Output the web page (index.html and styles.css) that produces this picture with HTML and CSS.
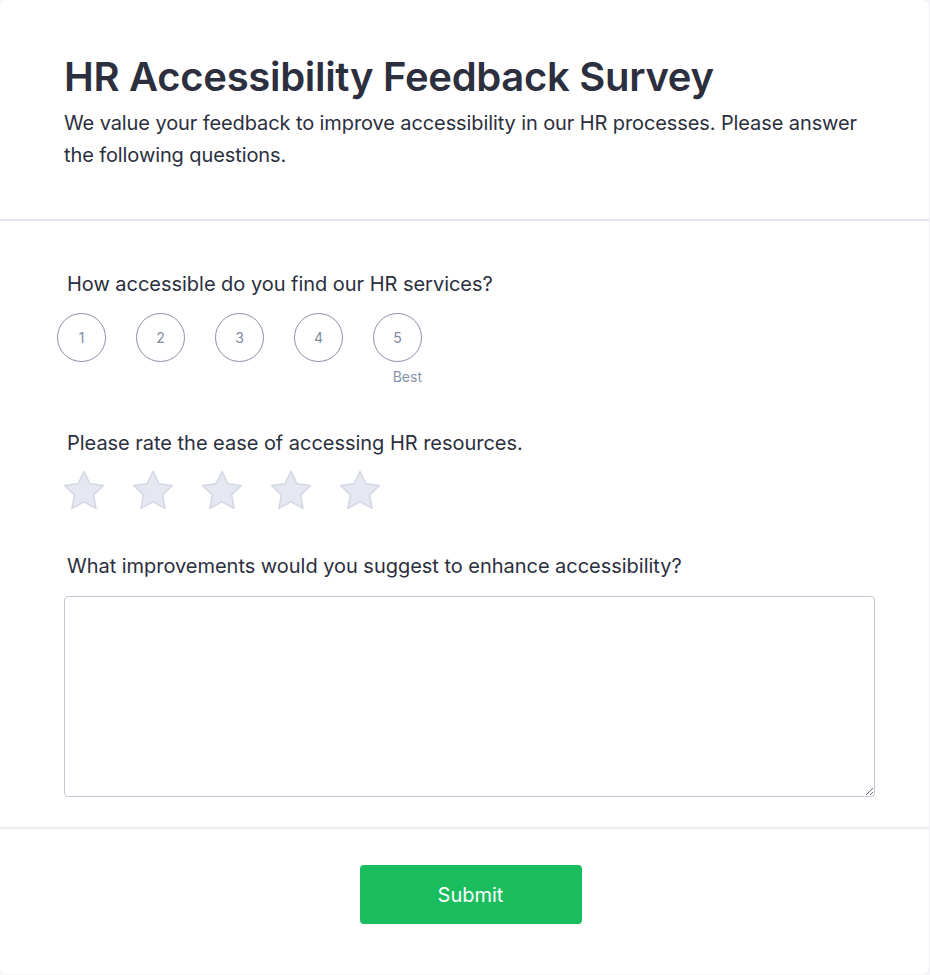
FILE: index.html
```html
<!DOCTYPE html>
<html lang="en">
<head>
<meta charset="utf-8">
<title>HR Accessibility Feedback Survey</title>
<link rel="stylesheet" href="styles.css">
</head>
<body>
<div class="card">
  <header class="head">
    <h1 class="title">HR Accessibility Feedback Survey</h1>
    <p class="intro">We value your feedback to improve accessibility in our HR processes. Please answer the following questions.</p>
  </header>
  <section class="body">
    <div class="question q1">
      <label class="qlabel">How accessible do you find our HR services?</label>
      <div class="scale">
        <button class="dot">1</button>
        <button class="dot">2</button>
        <button class="dot">3</button>
        <button class="dot">4</button>
        <div class="dotwrap">
          <button class="dot">5</button>
          <span class="best">Best</span>
        </div>
      </div>
    </div>
    <div class="question q2">
      <label class="qlabel">Please rate the ease of accessing HR resources.</label>
      <div class="stars">
        <svg class="star" viewBox="0 0 24 24"><path d="M12 2.6l2.85 5.9 6.45.85-4.7 4.5 1.2 6.45L12 17.2l-5.8 3.1 1.2-6.45-4.7-4.5 6.45-.85z"/></svg>
        <svg class="star" viewBox="0 0 24 24"><path d="M12 2.6l2.85 5.9 6.45.85-4.7 4.5 1.2 6.45L12 17.2l-5.8 3.1 1.2-6.45-4.7-4.5 6.45-.85z"/></svg>
        <svg class="star" viewBox="0 0 24 24"><path d="M12 2.6l2.85 5.9 6.45.85-4.7 4.5 1.2 6.45L12 17.2l-5.8 3.1 1.2-6.45-4.7-4.5 6.45-.85z"/></svg>
        <svg class="star" viewBox="0 0 24 24"><path d="M12 2.6l2.85 5.9 6.45.85-4.7 4.5 1.2 6.45L12 17.2l-5.8 3.1 1.2-6.45-4.7-4.5 6.45-.85z"/></svg>
        <svg class="star" viewBox="0 0 24 24"><path d="M12 2.6l2.85 5.9 6.45.85-4.7 4.5 1.2 6.45L12 17.2l-5.8 3.1 1.2-6.45-4.7-4.5 6.45-.85z"/></svg>
      </div>
    </div>
    <div class="question q3">
      <label class="qlabel">What improvements would you suggest to enhance accessibility?</label>
      <textarea class="answer"></textarea>
    </div>
  </section>
  <footer class="foot">
    <button class="submit">Submit</button>
  </footer>
</div>
</body>
</html>
```
FILE: styles.css
```css
* { box-sizing: border-box; }
html, body { margin: 0; padding: 0; background: #f7f7fa; }
body { font-family: Inter, "Noto Sans", sans-serif; color: #2b2f3e; }

.card {
  width: 929px;
  height: 974px;
  background: #fff;
  border-radius: 6px;
  box-shadow: 0 0 0 1px #f0f0f4;
  display: flex;
  flex-direction: column;
}

.head {
  padding: 53px 64px 48px;
  border-bottom: 2px solid #e2e3ec;
}
.title {
  margin: 0;
  font-size: 40px;
  line-height: 48px;
  font-weight: 600;
  letter-spacing: -0.3px;
  color: #2b2f3e;
}
.intro {
  margin: 6px 0 0;
  font-size: 20px;
  line-height: 32px;
  font-weight: 400;
  letter-spacing: -0.1px;
  color: #2b2f3e;
  max-width: 801px;
}

.body {
  padding: 51px 54px 30px 64px;
  border-bottom: 2px solid #ececf2;
  display: flex;
  flex-direction: column;
}
.question { display: flex; flex-direction: column; }
.qlabel {
  display: block;
  padding-left: 3px;
  font-size: 20px;
  line-height: 24px;
  font-weight: 400;
  letter-spacing: -0.03px;
  color: #2b2f3e;
}

.scale {
  display: flex;
  gap: 30px;
  margin: 17px 0 0 -7px;
  align-items: flex-start;
}
.dotwrap { display: flex; flex-direction: column; align-items: flex-end; }
.dot {
  width: 49px;
  height: 49px;
  border-radius: 50%;
  border: 1px solid #8a90a6;
  background: #fff;
  font-family: Inter, sans-serif;
  font-size: 14px;
  color: #7d8ba1;
  padding: 0;
}
.best {
  font-size: 14px;
  line-height: 20px;
  color: #8695aa;
  margin-top: 5px;
}

.q2 { margin-top: 44px; }
.stars {
  display: flex;
  gap: 19px;
  margin: 11px 0 0 -5px;
}
.star {
  width: 50px;
  height: 50px;
  fill: #e5e7f1;
  stroke: #d3d7e3;
  stroke-width: 0.7;
  stroke-linejoin: round;
}

.q3 { margin-top: 38px; }
.answer {
  margin-top: 18px;
  width: 811px;
  height: 201px;
  border: 1px solid #c3c6d4;
  border-radius: 4px;
  resize: vertical;
  font-family: Inter, sans-serif;
}

.foot {
  flex: 1;
  display: flex;
  justify-content: center;
  padding: 36px 0 0 12px;
}
.submit {
  width: 222px;
  height: 59px;
  background: #1abd5e;
  color: #fff;
  border: none;
  border-radius: 4px;
  font-family: Inter, sans-serif;
  font-size: 20px;
  font-weight: 400;
}
```
